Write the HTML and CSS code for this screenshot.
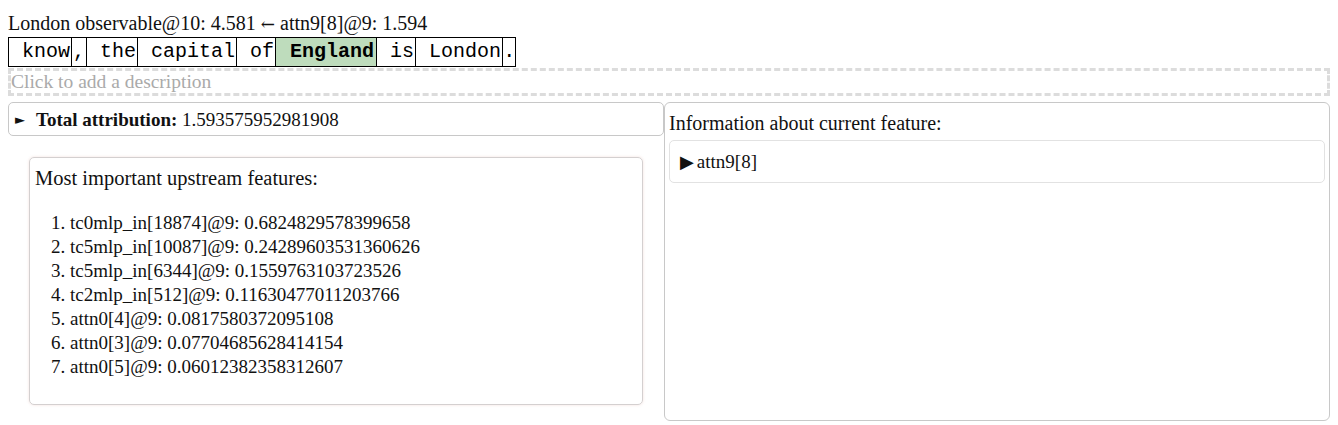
FILE: index.html
```html
<!DOCTYPE html>
<html>
<head>
<meta charset="utf-8">
<link rel="stylesheet" href="styles.css">
</head>
<body>
<div class="title">London observable@10: 4.581 <span class="arrow">←</span> attn9[8]@9: 1.594</div>
<div class="tokens"><span class="tok">&nbsp;know</span><span class="tok">,</span><span class="tok">&nbsp;the</span><span class="tok">&nbsp;capital</span><span class="tok">&nbsp;of</span><span class="tok hl">&nbsp;England</span><span class="tok">&nbsp;is</span><span class="tok">&nbsp;London</span><span class="tok dot">.</span></div>
<div class="desc">Click to add a description</div>
<div class="columns">
  <div class="left">
    <div class="summary"><span class="tri">►</span><b class="lbl">Total attribution:</b> 1.593575952981908</div>
    <div class="card">
      <div class="card-head">Most important upstream features:</div>
      <ol class="feats">
        <li>tc0mlp_in[18874]@9: 0.6824829578399658</li>
        <li>tc5mlp_in[10087]@9: 0.24289603531360626</li>
        <li>tc5mlp_in[6344]@9: 0.1559763103723526</li>
        <li>tc2mlp_in[512]@9: 0.11630477011203766</li>
        <li>attn0[4]@9: 0.0817580372095108</li>
        <li>attn0[3]@9: 0.07704685628414154</li>
        <li>attn0[5]@9: 0.06012382358312607</li>
      </ol>
    </div>
  </div>
  <div class="right">
    <div class="info-head">Information about current feature:</div>
    <div class="info-box"><span class="big-tri">▶</span><span class="feat-name">attn9[8]</span></div>
  </div>
</div>
</body>
</html>
```
FILE: styles.css
```css
html, body {
  margin: 0;
  padding: 0;
  background: #fff;
}
body {
  margin: 8px;
  font-family: "Liberation Serif", "Times New Roman", serif;
  font-size: 19px;
  color: #111;
}
.title {
  height: 28px;
  line-height: 28px;
  padding-top: 1px;
  font-size: 20px;
}
.arrow {
  font-family: "DejaVu Serif", serif;
  font-size: 17px;
}
.tokens {
  display: flex;
  font-family: "Liberation Mono", "Courier New", monospace;
  font-size: 20px;
  line-height: 28px;
  color: #000;
}
.tok {
  border: 1px solid #000;
  white-space: pre;
  padding: 0 1px;
}
.tok + .tok {
  margin-left: -1px;
}
.tok.hl {
  background: #bedcbc;
  font-weight: bold;
  padding: 0 2px;
}
.tok.dot {
  padding: 0;
}
.desc {
  margin-top: 1px;
  border: 3px dashed #dcdcdc;
  height: 22px;
  line-height: 22px;
  color: #aaa;
  font-size: 19.5px;
}
.columns {
  display: flex;
  margin-top: 6px;
}
.left {
  flex: 0 0 656px;
}
.right {
  flex: 1;
  border: 1px solid #c8c8c8;
  border-radius: 6px;
  height: 317px;
  padding: 0 4px;
}
.summary {
  border: 1px solid #c8c8c8;
  border-radius: 5px;
  height: 32px;
  line-height: 33px;
  padding-left: 6px;
}
.tri {
  font-size: 13px;
  display: inline-block;
  width: 21px;
  vertical-align: top;
  font-family: "DejaVu Sans", sans-serif;
}
.lbl {
  font-weight: bold;
}
.card {
  margin: 21px 21px 0 21px;
  border: 1px solid #d4d0d0;
  border-radius: 5px;
  box-shadow: 0 0 3px rgba(220, 170, 160, 0.35);
  height: 246px;
  padding: 0 5px;
}
.card-head {
  margin-top: 8px;
  line-height: 24px;
  font-size: 20.5px;
}
.feats {
  margin: 21px 0 0 0;
  padding-left: 35px;
  line-height: 24px;
}
.info-head {
  margin-top: 8px;
  line-height: 24px;
  font-size: 20px;
}
.info-box {
  margin-top: 5px;
  border: 1px solid #e2e2e2;
  border-radius: 5px;
  height: 41px;
  line-height: 41px;
  padding-left: 10px;
}
.big-tri {
  font-size: 18px;
  font-family: "DejaVu Sans", sans-serif;
  margin-right: 3px;
}
.feat-name {
  font-family: "Liberation Serif", serif;
}
```
